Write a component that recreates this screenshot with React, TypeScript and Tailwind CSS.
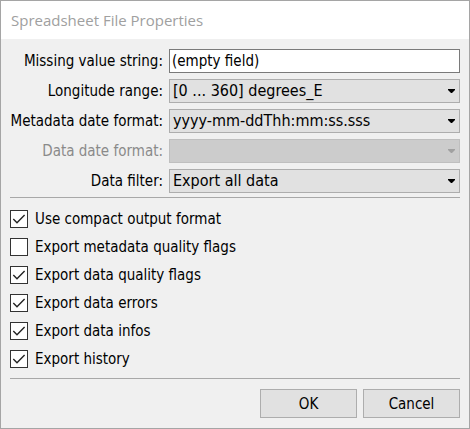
import { useId, useState } from "react";

const FIELD = "h-6 w-full min-w-0 border leading-5 outline-none";

function FieldLabel({ htmlFor, disabled, children }: { htmlFor: string; disabled?: boolean; children: string }) {
  return (
    <label htmlFor={htmlFor} className={`text-right whitespace-nowrap ${disabled ? "text-[#8a8a8a]" : ""}`}>
      {children}
    </label>
  );
}

function TextRow({ label, initial }: { label: string; initial: string }) {
  const id = useId();
  return (
    <>
      <FieldLabel htmlFor={id}>{label}</FieldLabel>
      <input id={id} type="text" defaultValue={initial} className={`${FIELD} border-[#7a7a7a] bg-white px-0.5 text-[15px]`} />
    </>
  );
}

function SelectRow({ label, options, disabled }: { label: string; options: string[]; disabled?: boolean }) {
  const id = useId();
  return (
    <>
      <FieldLabel htmlFor={id} disabled={disabled}>
        {label}
      </FieldLabel>
      <div className="relative">
        <select
          id={id}
          disabled={disabled}
          className={`${FIELD} block appearance-none pr-5 pl-[3px] text-[16px] opacity-100 ${
            disabled ? "border-[#bfbfbf] bg-[#cccccc]" : "border-[#adadad] bg-[#e1e1e1]"
          }`}
        >
          {options.map((o) => (
            <option key={o}>{o}</option>
          ))}
        </select>
        <svg
          viewBox="0 0 7 4"
          className={`pointer-events-none absolute top-2.5 right-[5px] h-1 w-[7px] ${disabled ? "text-[#a0a0a0]" : "text-black"}`}
          aria-hidden="true"
        >
          <path d="M0 0h7v1L4 4H3L0 1z" fill="currentColor" />
        </svg>
      </div>
    </>
  );
}

function CheckRow({ label, initial }: { label: string; initial: boolean }) {
  const [on, setOn] = useState(initial);
  return (
    <label className="flex h-7 items-center gap-[7px]">
      <span className="grid size-[18px] shrink-0">
        <input
          type="checkbox"
          checked={on}
          onChange={(e) => setOn(e.target.checked)}
          className="col-start-1 row-start-1 size-[18px] appearance-none border border-[#333333] bg-white"
        />
        {on && (
          <svg viewBox="0 0 18 18" className="pointer-events-none col-start-1 row-start-1 size-[18px]" aria-hidden="true">
            <path d="M3.3 9l3.7 3.7L14.6 5" fill="none" stroke="#222222" strokeWidth="1.4" />
          </svg>
        )}
      </span>
      {label}
    </label>
  );
}

const CHECKS: [string, boolean][] = [
  ["Use compact output format", true],
  ["Export metadata quality flags", false],
  ["Export data quality flags", true],
  ["Export data errors", true],
  ["Export data infos", true],
  ["Export history", true],
];

export default function App() {
  return (
    <div className="border border-[#a5a5a5] bg-[#f0f0f0] font-['DejaVu_Sans_Condensed','DejaVu_Sans',sans-serif] text-[15px] leading-5 text-black">
      <header className="flex h-[38px] items-center bg-white px-2.5">
        <h1 className="font-['Open_Sans',sans-serif] text-[15px] text-[#a0a0a0]">Spreadsheet File Properties</h1>
      </header>
      <form className="px-[9px] pt-2.5 pb-2.5" onSubmit={(e) => e.preventDefault()}>
        <div className="grid grid-cols-[153px_1fr] items-center gap-x-1.5 gap-y-1.5">
          <TextRow label="Missing value string:" initial="(empty field)" />
          <SelectRow label="Longitude range:" options={["[0 ... 360] degrees_E"]} />
          <SelectRow label="Metadata date format:" options={["yyyy-mm-ddThh:mm:ss.sss"]} />
          <SelectRow label="Data date format:" options={[""]} disabled />
          <SelectRow label="Data filter:" options={["Export all data"]} />
        </div>
        <hr className="mt-1 border-[#a8a8a8]" />
        <div className="mt-[7px] mb-[5px]">
          {CHECKS.map(([label, on]) => (
            <CheckRow key={label} label={label} initial={on} />
          ))}
        </div>
        <hr className="border-[#a8a8a8]" />
        <div className="mt-2.5 flex justify-end gap-1.5">
          <button type="submit" className="h-[29px] w-[97px] border border-[#adadad] bg-[#e1e1e1]">
            OK
          </button>
          <button type="button" className="h-[29px] w-[97px] border border-[#adadad] bg-[#e1e1e1]">
            Cancel
          </button>
        </div>
      </form>
    </div>
  );
}
